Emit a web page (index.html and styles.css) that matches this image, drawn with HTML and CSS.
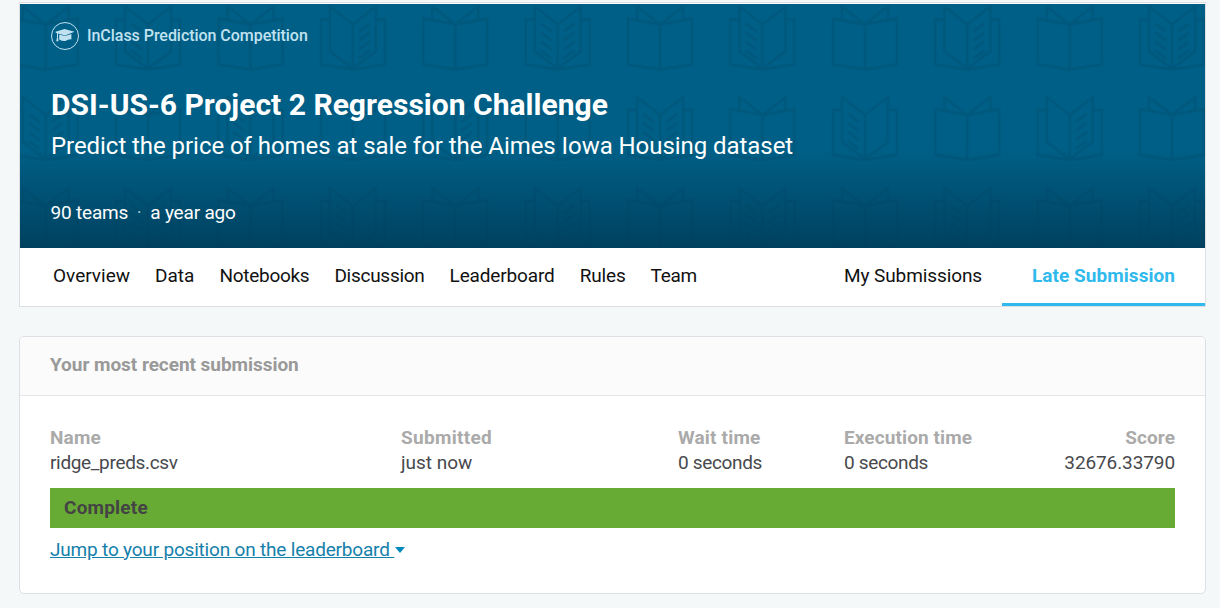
FILE: index.html
```
<!DOCTYPE html>
<html lang="en">
<head>
<meta charset="utf-8">
<title>DSI-US-6 Project 2 Regression Challenge</title>
<link rel="stylesheet" href="styles.css">
</head>
<body>
<header class="competition">
  <div class="banner">
    <svg class="books" width="1185" height="244" viewBox="20 4 1185 244" aria-hidden="true">
      <defs>
        <g id="closed"><path d="M0 18L-32 12V58L0 63L32 58V12ZV63M-23 13V0L0 18L23 0V13"/></g>
        <g id="open"><path d="M-23 13H-32V58L0 63L32 58V13H23M0 18L-23 0V45L0 62L23 45V0ZV62"/></g>
        <path id="left" d="M-17 17L-6 25M-17 26L-6 34M-17 35L-6 43M-17 44L-6 52"/>
        <path id="right" d="M17 17L6 25M17 26L6 34M17 35L6 43M17 44L6 52"/>
        <pattern id="shelf" x="-5.5" y="5.5" width="614.4" height="272" patternUnits="userSpaceOnUse">
          <g class="book-lines">
            <g transform="translate(51.2 1)"><use href="#closed"/><g transform="translate(102.4)"><use href="#open"/><use href="#left"/></g><use href="#closed" x="204.8"/><g transform="translate(307.2)"><use href="#open"/><use href="#right"/></g><use href="#closed" x="409.6"/><g transform="translate(512)"><use href="#open"/><use href="#left"/><use href="#right"/></g></g>
            <g transform="translate(51.2 91.5)"><use href="#open"/><use href="#left"/><use href="#right"/><use href="#closed" x="102.4"/><g transform="translate(204.8)"><use href="#open"/><use href="#left"/></g><use href="#closed" x="307.2"/><g transform="translate(409.6)"><use href="#open"/><use href="#right"/></g><use href="#closed" x="512"/></g>
            <g transform="translate(51.2 182.5)"><use href="#closed"/><g transform="translate(102.4)"><use href="#open"/><use href="#left"/><use href="#right"/></g><use href="#closed" x="204.8"/><g transform="translate(307.2)"><use href="#open"/><use href="#left"/></g><use href="#closed" x="409.6"/><g transform="translate(512)"><use href="#open"/><use href="#right"/></g></g>
          </g>
        </pattern>
      </defs>
      <rect x="20" y="4" width="1185" height="244" fill="url(#shelf)"/>
    </svg>
    <div class="banner-content">
      <div class="kind">
        <svg class="cap" width="28" height="28" viewBox="0 0 28 28" aria-hidden="true"><circle cx="14" cy="14" r="13.5" fill="none" stroke="currentColor"/><path fill="currentColor" d="M4.5 9.8L13.5 7L23.5 9.7L14 13.4L7 11.6V15.5L7.6 19.3H5.2L6 15.5V11.2L4.5 10.5ZM8.2 12.4L14 14L20.4 12V17.4Q17.5 17 14.5 18.9Q11.5 19.6 8.2 17.4Z"/></svg>
        <span class="kind-name">InClass Prediction Competition</span>
      </div>
      <h1>DSI-US-6 Project 2 Regression Challenge</h1>
      <p class="subtitle">Predict the price of homes at sale for the Aimes Iowa Housing dataset</p>
      <p class="meta"><span>90 teams</span><span class="dot">·</span><span>a year ago</span></p>
    </div>
  </div>
  <nav class="tabs">
    <a>Overview</a><a>Data</a><a class="snug">Notebooks</a><a class="snug">Discussion</a><a class="near">Leaderboard</a><a class="near">Rules</a><a class="tight">Team</a>
    <a class="mine">My Submissions</a><a class="late">Late Submission</a>
  </nav>
</header>
<main class="card">
  <h2>Your most recent submission</h2>
  <div class="card-body">
    <div class="facts">
      <div><b>Name</b><span class="tight">ridge_preds.csv</span></div>
      <div><b class="wide">Submitted</b><span>just now</span></div>
      <div><b>Wait time</b><span class="tight">0 seconds</span></div>
      <div><b class="plain">Execution time</b><span class="tight">0 seconds</span></div>
      <div class="score"><b class="plain">Score</b><span class="amount">32676.33790</span></div>
    </div>
    <div class="status">Complete</div>
    <div class="jump"><a>Jump to your position on the leaderboard&nbsp;</a><i class="caret"></i></div>
  </div>
</main>
</body>
</html>
```
FILE: styles.css
```
* { box-sizing: border-box; }
body { margin: 0; padding: 2px 14px 0 19px; height: 608px; overflow: hidden; background: #f5f8f9; font-family: Roboto, "Liberation Sans", sans-serif; font-size: 19px; color: #47494d; }
h1, h2, p { margin: 0; }

/* Letter fitting */
.tight { letter-spacing: -.33px; }
.snug { letter-spacing: -.27px; }
.near { letter-spacing: -.15px; }
.facts .wide { letter-spacing: .3px; }
.facts .plain { letter-spacing: .1px; }

/* Competition header */
.competition { height: 305px; border: 1px solid #dcdfe4; background: #fff; padding-top: 1px; }
.banner { position: relative; height: 244px; overflow: hidden; background: linear-gradient(#005f86 60%, #00415f); }
.books { position: absolute; inset: 0; }
.book-lines { fill: none; stroke: #003d5c; stroke-opacity: .2; stroke-width: 2.8; }
.banner-content { position: relative; padding: 18px 31px; color: #fff; }
.kind { display: flex; align-items: center; gap: 8px; height: 28px; font-size: 16px; color: #c0e2f0; }
.kind-name { margin-top: -2px; font-weight: 500; letter-spacing: -.04px; }
h1 { margin-top: 37px; font-size: 30px; line-height: 36px; font-weight: 700; letter-spacing: .02px; }
.subtitle { margin-top: 7px; font-size: 24px; line-height: 32px; letter-spacing: -.055px; }
.meta { display: flex; margin: 39px 0 0 -.5px; line-height: 24px; letter-spacing: -.18px; }
.dot { width: 22px; text-align: center; color: #9ac4d6; }

/* Tabs */
.tabs { display: flex; gap: 25px; height: 58px; padding-left: 33px; line-height: 55px; color: #111; }
.mine { margin-left: auto; letter-spacing: -.1px; }
.late { width: 203px; margin-left: -5px; padding-left: 30px; border-bottom: 3px solid #30b9ec; color: #30b9ec; font-weight: 700; letter-spacing: .05px; }

/* Submission card */
.card { margin-top: 29px; height: 258px; border: 1px solid #dcdfe3; border-radius: 5px; background: #fff; overflow: hidden; }
h2 { height: 59px; padding-left: 30px; border-bottom: 1px solid #e5e6e8; background: #fbfbfb; color: #999; font-size: 19px; line-height: 55px; font-weight: 700; letter-spacing: -.04px; }
.card-body { padding: 29px 30px; }
.facts { display: grid; grid-template-columns: 351px 277px 166px 1fr auto; line-height: 25px; }
.facts div { display: flex; flex-direction: column; }
.facts b { color: #aaa; letter-spacing: .18px; }
.facts .amount { letter-spacing: -.1px; }
.score { align-items: flex-end; }
.status { height: 40px; margin-top: 13px; padding-left: 14px; background: #67ab34; color: #444; line-height: 39px; font-weight: 700; letter-spacing: .2px; }
.jump { display: flex; align-items: center; height: 26px; margin-top: 8px; color: #1580ab; }
.jump a { text-decoration: underline; letter-spacing: -.19px; }
.caret { margin: 2px 0 0 1px; border: 5.5px solid transparent; border-top: 6px solid #008abc; border-bottom: 0; }
```
